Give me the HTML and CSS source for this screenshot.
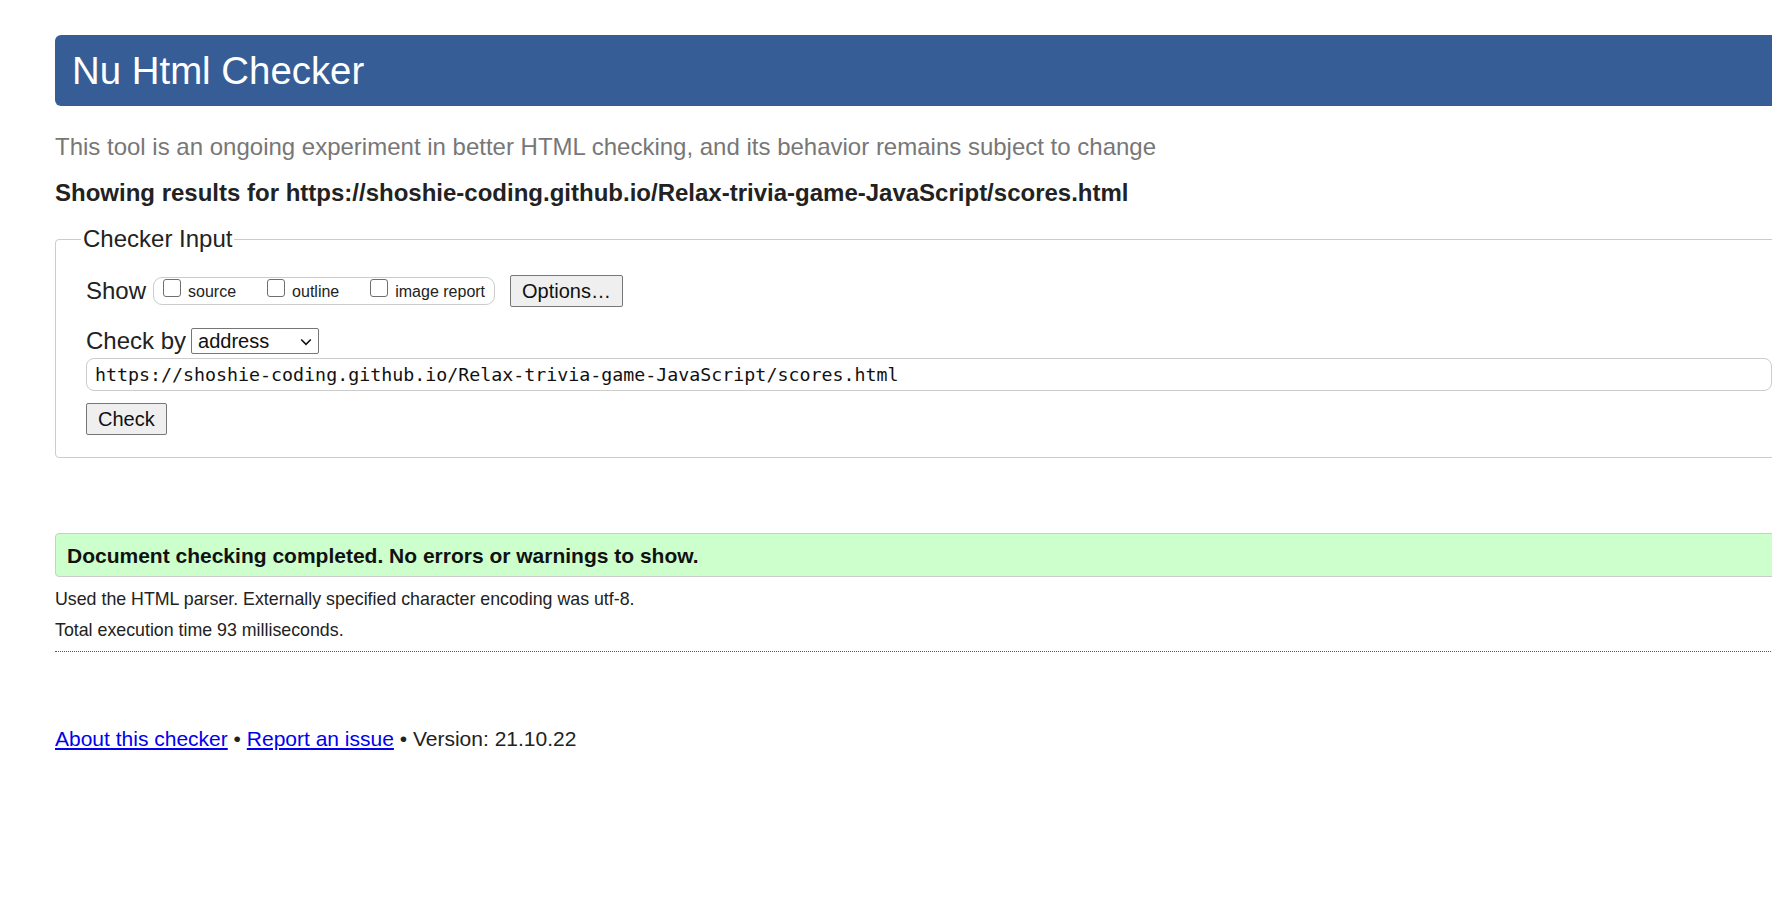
FILE: index.html
```html
<!DOCTYPE html>
<html lang="en">
<head>
<meta charset="utf-8">
<title>Showing results for https://shoshie-coding.github.io/Relax-trivia-game-JavaScript/scores.html - Nu Html Checker</title>
<link rel="stylesheet" href="styles.css">
</head>
<body>
<div class="page">
  <h1 class="title">Nu Html Checker</h1>
  <p class="subtitle">This tool is an ongoing experiment in better HTML checking, and its behavior remains subject to change</p>
  <p class="results-for">Showing results for https://shoshie-coding.github.io/Relax-trivia-game-JavaScript/scores.html</p>

  <form class="checker-form">
    <fieldset class="checker-input">
      <legend class="legend">Checker Input</legend>
      <div class="row show-row">
        <span class="row-label">Show</span>
        <div class="show-options">
          <label class="opt"><input type="checkbox" class="cb"><span class="opt-text">source</span></label>
          <label class="opt"><input type="checkbox" class="cb"><span class="opt-text">outline</span></label>
          <label class="opt"><input type="checkbox" class="cb"><span class="opt-text">image report</span></label>
        </div>
        <button type="button" class="btn options-btn">Options…</button>
      </div>
      <div class="row checkby-row">
        <span class="row-label">Check by</span>
        <div class="select-wrap">
          <select class="select"><option>address</option></select>
          <svg class="chevron" width="12" height="8" viewBox="0 0 12 8"><path d="M1.2 1.5 L6 6.3 L10.8 1.5" fill="none" stroke="#111" stroke-width="1.6"/></svg>
        </div>
      </div>
      <input class="url" type="text" value="https://shoshie-coding.github.io/Relax-trivia-game-JavaScript/scores.html">
      <div class="row check-row">
        <button type="button" class="btn check-btn">Check</button>
      </div>
    </fieldset>
  </form>

  <div class="success">Document checking completed. No errors or warnings to show.</div>
  <p class="details">Used the HTML parser. Externally specified character encoding was utf-8.</p>
  <p class="details details-time">Total execution time 93 milliseconds.</p>
  <hr class="sep">
  <p class="footer"><a href="#">About this checker</a> • <a href="#">Report an issue</a> • Version: 21.10.22</p>
</div>
</body>
</html>
```

FILE: styles.css
```css
html, body {
  margin: 0;
  padding: 0;
  overflow: hidden;
  background: #fff;
}
body {
  font-family: "Liberation Sans", Arial, sans-serif;
  color: #222;
}
.page {
  padding-top: 35px;
  margin-left: 55px;
  width: 1748px;
}
.title {
  margin: 0;
  height: 71px;
  line-height: 71px;
  background: #365d95;
  color: #fff;
  font-weight: normal;
  font-size: 38.4px;
  padding-left: 17px;
  border-radius: 6px 0 0 6px;
}
.subtitle {
  margin: 28px 0 0;
  font-size: 24px;
  line-height: 26px;
  color: #777;
}
.results-for {
  margin: 20px 0 0;
  font-size: 24px;
  line-height: 26px;
  font-weight: bold;
  color: #222;
}
.checker-form {
  margin: 19px 0 0;
}
.checker-input {
  margin: 0;
  border: 1px solid #ccc;
  border-radius: 4px;
  padding: 0 30px 22px 30px;
}
.legend {
  font-size: 24px;
  line-height: 28px;
  padding: 0 2px;
  margin-left: -5px;
  color: #222;
}
.row {
  display: flex;
  align-items: center;
}
.row-label {
  font-size: 24px;
  line-height: 26px;
  color: #222;
}
.show-row {
  margin-top: 22px;
  height: 32px;
}
.show-options {
  display: flex;
  margin-left: 7px;
  height: 26px;
  border: 1px solid #ccc;
  border-radius: 9px;
  padding: 0 9px;
}
.opt {
  display: flex;
  align-items: flex-start;
  margin-right: 31px;
}
.opt:last-child {
  margin-right: 0;
}
.cb {
  appearance: none;
  -webkit-appearance: none;
  margin: 1px 7px 0 0;
  width: 18px;
  height: 18px;
  border: 1.5px solid #6f6f6f;
  border-radius: 3px;
  background: #fff;
  box-sizing: border-box;
}
.opt-text {
  font-size: 16px;
  line-height: 18px;
  margin-top: 5px;
  color: #222;
}
.btn {
  font-family: "Liberation Sans", Arial, sans-serif;
  font-size: 20px;
  color: #111;
  background: #efefef;
  border: 1px solid #767676;
  border-radius: 2px;
  height: 32px;
  padding: 0 11px;
  margin: 0;
}
.options-btn {
  margin-left: 15px;
}
.checkby-row {
  margin-top: 21px;
  height: 26px;
}
.select-wrap {
  position: relative;
  margin-left: 5px;
}
.select {
  appearance: none;
  -webkit-appearance: none;
  width: 128px;
  height: 26px;
  border: 1px solid #767676;
  border-radius: 2px;
  background: #fff;
  font-family: "Liberation Sans", Arial, sans-serif;
  font-size: 20px;
  color: #111;
  padding: 0 0 0 6px;
  margin: 0;
  display: block;
}
.chevron {
  position: absolute;
  left: 109px;
  top: 10px;
  pointer-events: none;
}
.url {
  display: block;
  box-sizing: border-box;
  width: 100%;
  height: 33px;
  margin: 4px 0 0;
  border: 1px solid #ccc;
  border-radius: 8px;
  padding: 0 8px;
  font-family: "DejaVu Sans Mono", "Liberation Mono", monospace;
  font-size: 18.3px;
  color: #111;
  background: #fff;
}
.check-row {
  margin-top: 12px;
}
.success {
  margin-top: 75px;
  box-sizing: border-box;
  height: 44px;
  line-height: 43px;
  border: 1px solid #ccc;
  border-radius: 4px 0 0 4px;
  background: #ccffcc;
  padding-left: 11px;
  font-size: 21px;
  font-weight: bold;
  color: #111;
}
.details {
  margin: 9px 0 0;
  font-size: 17.8px;
  line-height: 26px;
  color: #222;
}
.details-time {
  margin-top: 5px;
}
.sep {
  margin: 8px 0 0;
  border: 0;
  border-top: 1px dotted #555;
  height: 0;
}
.footer {
  margin: 74px 0 0;
  font-size: 21px;
  line-height: 26px;
  color: #222;
}
.footer a {
  color: #0000ee;
}
```
